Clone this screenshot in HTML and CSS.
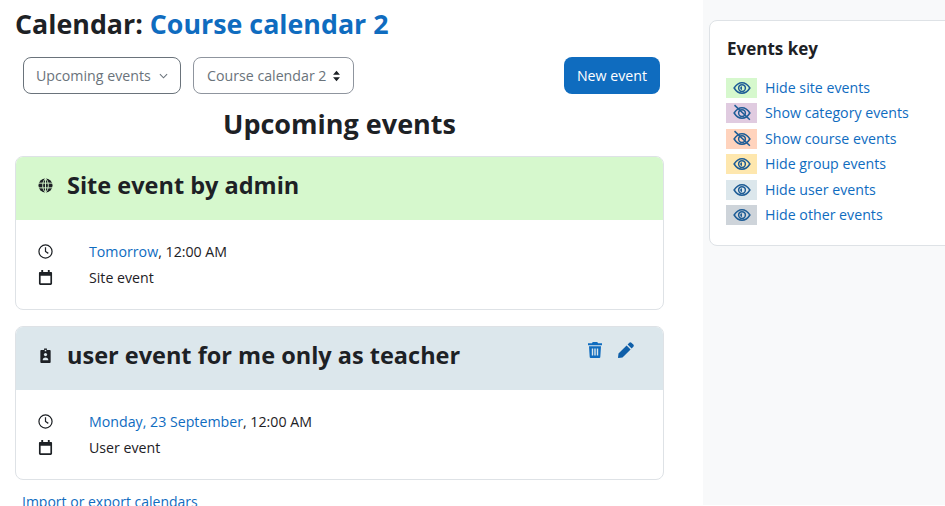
FILE: index.html
```html
<!DOCTYPE html>
<html lang="en">
<head>
<meta charset="utf-8">
<title>Calendar: Course calendar 2</title>
<link rel="stylesheet" href="styles.css">
</head>
<body>
<svg class="defs" width="0" height="0" aria-hidden="true">
  <symbol id="eye" viewBox="0 0 24 24"><path d="M1.500 12C4.500 7.200 8 5 12 5s7.500 2.200 10.500 7c-3 4.800-6.500 7-10.500 7S4.500 16.800 1.500 12z" fill="none" stroke="currentColor" stroke-width="2"/><circle cx="12" cy="12" r="4.500" fill="none" stroke="currentColor" stroke-width="2"/><path d="M12 9.500a2.500 2.500 0 0 0 0 5z" fill="currentColor"/></symbol>
  <symbol id="eyeoff" viewBox="0 0 24 24"><path d="M1.500 12C4.500 7.200 8 5 12 5s7.500 2.200 10.500 7c-3 4.800-6.500 7-10.500 7S4.500 16.800 1.500 12z" fill="none" stroke="currentColor" stroke-width="2"/><circle cx="12" cy="12" r="4.500" fill="none" stroke="currentColor" stroke-width="2"/><path d="M2 1.500L22.500 21" stroke="currentColor" stroke-width="2"/></symbol>
  <symbol id="clock" viewBox="0 0 16 16"><circle cx="8" cy="8" r="7" fill="none" stroke="currentColor" stroke-width="1.300"/><path d="M8 3.500V8l3 2" fill="none" stroke="currentColor" stroke-width="1.300"/></symbol>
  <symbol id="cal" viewBox="0 0 16 16"><path d="M3.500 0h2v2h5V0h2v2H14a1 1 0 0 1 1 1v11.500a1.500 1.500 0 0 1-1.500 1.500h-11A1.500 1.500 0 0 1 1 14.500V3a1 1 0 0 1 1-1h1.500zM2.800 6v8.200h10.400V6z" fill="currentColor" fill-rule="evenodd"/></symbol>
</svg>
<div class="page">
  <main class="main">
    <h1 class="title">Calendar: <a href="#">Course calendar 2</a></h1>
    <div class="controls">
      <button class="select select-view">Upcoming events
        <svg class="chev" viewBox="0 0 10 6" width="9" height="6"><path d="M1 1l4 4 4-4" fill="none" stroke="currentColor" stroke-width="1.200"/></svg>
      </button>
      <button class="select select-course">Course calendar 2
        <svg class="updown" viewBox="0 0 10 14" width="9" height="12"><path d="M5 1l4 4.500H1zM5 13L1 8.500h8z" fill="#1d2125"/></svg>
      </button>
      <button class="primary">New event</button>
    </div>
    <h2 class="heading">Upcoming events</h2>

    <article class="event">
      <header class="event-head site">
        <svg class="type-icon" viewBox="0 0 16 16" width="15" height="15"><circle cx="8" cy="8" r="7.500" fill="#1d2125"/><path d="M0 5.500h16M0 10.500h16M8 0v16M8 .5C4 4 4 12 8 15.500M8 .5c4 3.500 4 11.500 0 15" fill="none" stroke="#d6f8cd" stroke-width="1"/></svg>
        <h3>Site event by admin</h3>
      </header>
      <div class="event-body">
        <div class="row">
          <svg class="row-icon"><use href="#clock"/></svg>
          <span><a href="#">Tomorrow</a>, 12:00 AM</span>
        </div>
        <div class="row">
          <svg class="row-icon"><use href="#cal"/></svg>
          <span>Site event</span>
        </div>
      </div>
    </article>

    <article class="event">
      <header class="event-head user">
        <svg class="type-icon" viewBox="0 0 16 16" width="15" height="15"><path d="M3.500 2h3V.6h3V2h3a1 1 0 0 1 1 1v12a1 1 0 0 1-1 1h-9a1 1 0 0 1-1-1V3a1 1 0 0 1 1-1z" fill="#1d2125"/><circle cx="8" cy="7" r="1.700" fill="#dce7ec"/><path d="M5 13c0-2 1.200-3 3-3s3 1 3 3z" fill="#dce7ec"/><rect x="7.200" y="2" width="1.600" height="1.500" fill="#dce7ec"/></svg>
        <h3>user event for me only as teacher</h3>
        <div class="actions">
          <svg viewBox="0 0 14 16" width="14" height="16"><path d="M4.700 0h4.600l.7 1.200h4v2H0v-2h4zM1 4.300h12L12.300 15a1 1 0 0 1-1 1H2.700a1 1 0 0 1-1-1zM3.800 6.500v7h1.400v-7zm2.500 0v7h1.400v-7zm2.500 0v7h1.400v-7z" fill="#0f6cbf" fill-rule="evenodd"/></svg>
          <svg viewBox="0 0 16 16" width="16" height="16"><path d="M11.300.7a1.500 1.500 0 0 1 2.100 0l1.900 1.900a1.500 1.500 0 0 1 0 2.100l-1.700 1.700-4-4zM8.600 3.400l4 4L4.500 15.500.4 16a.4.4 0 0 1-.4-.4l.5-4.100z" fill="#0f5fa8"/></svg>
        </div>
      </header>
      <div class="event-body">
        <div class="row">
          <svg class="row-icon"><use href="#clock"/></svg>
          <span><a href="#">Monday, 23 September</a>, 12:00 AM</span>
        </div>
        <div class="row">
          <svg class="row-icon"><use href="#cal"/></svg>
          <span>User event</span>
        </div>
      </div>
    </article>
    <a class="export" href="#">Import or export calendars</a>
  </main>
  <aside class="side">
    <section class="key">
      <h4>Events key</h4>
      <ul>
        <li><span class="swatch site"><svg><use href="#eye"/></svg></span><a href="#">Hide site events</a></li>
        <li><span class="swatch category"><svg><use href="#eyeoff"/></svg></span><a href="#">Show category events</a></li>
        <li><span class="swatch course"><svg><use href="#eyeoff"/></svg></span><a href="#">Show course events</a></li>
        <li><span class="swatch group"><svg><use href="#eye"/></svg></span><a href="#">Hide group events</a></li>
        <li><span class="swatch user"><svg><use href="#eye"/></svg></span><a href="#">Hide user events</a></li>
        <li><span class="swatch other"><svg><use href="#eye"/></svg></span><a href="#">Hide other events</a></li>
      </ul>
    </section>
  </aside>
</div>
</body>
</html>
```
FILE: styles.css
```css
* { box-sizing: border-box; }
html, body { margin: 0; height: 506px; overflow: hidden; }
body {
  background: #fff;
  color: #1d2125;
  font-family: "Open Sans", "Noto Sans", sans-serif;
  font-size: 14.2px;
  line-height: 22px;
}
a { color: #0f6cbf; text-decoration: none; }
.defs { position: absolute; }
.page { display: flex; height: 506px; }
.main { width: 703px; flex: none; padding: 0 39px 0 15px; }
.title { margin: 0; padding-top: 7px; font-size: 26.800px; line-height: 34px; font-weight: 700; }
.controls { display: flex; align-items: center; margin-top: 16px; padding: 0 4px 0 8px; }
.select {
  height: 37px;
  display: flex; align-items: center; justify-content: space-between;
  background: #fff; color: #6a737b;
  border: 1px solid #8f959e; border-radius: 8px;
  font: inherit; padding: 0 12px;
}
.select-view { width: 158px; border-color: #6a737b; }
.select-course { width: 161px; margin-left: 12px; padding-left: 13px; }
.primary {
  margin-left: auto; width: 96px; height: 37px;
  background: #0f6cbf; color: #fff; border: 0; border-radius: 8px;
  font: inherit;
}
.heading { margin: 12px 0 0; text-align: center; font-size: 27px; line-height: 36px; font-weight: 700; }
.event { margin-top: 14px; border: 1px solid #dee2e6; border-radius: 8px; overflow: hidden; height: 154px; }
.event + .event { margin-top: 16px; }
.event-head { height: 63px; display: flex; align-items: center; padding: 0 28px 6px 22px; position: relative; }
.event-head.site { background: #d6f8cd; }
.event-head.user { background: #dce7ec; }
.event-head h3 { margin: -1px 0 0 14px; font-size: 23.500px; line-height: 30px; font-weight: 700; }
.type-icon { flex: none; }
.actions { position: absolute; right: 29px; top: 15px; display: flex; gap: 16px; }
.event-body { padding: 19px 22px 0; }
.row { display: flex; align-items: center; height: 26px; }
.row-icon { width: 15px; height: 15px; flex: none; margin: 0 36px 2px 0; color: #1d2125; }
.export { display: block; margin: 11px 0 0 7px; font-size: 14px; }
.side { flex: 1; background: #f8f9fa; padding: 20px 0 0 6px; height: 505px; }
.key { height: 226px; margin-right: -20px; background: #fff; border: 1px solid #dee2e6; border-radius: 8px; padding: 16px 16px; }
.key h4 { margin: 0 0 0 1px; font-size: 17px; line-height: 24px; font-weight: 700; }
.key ul { list-style: none; margin: 17px 0 0; padding: 0; }
.key li { display: flex; align-items: center; height: 20px; margin-bottom: 5.400px; }
.swatch { width: 31px; height: 20px; margin-right: 8px; display: flex; align-items: center; justify-content: center; color: #1d5c96; }
.swatch svg { width: 18px; height: 18px; }
.swatch.site { background: #d6f8cd; }
.swatch.category { background: #e0cbe0; }
.swatch.course { background: #ffd3bd; }
.swatch.group { background: #fee7ae; }
.swatch.user { background: #dce7ec; }
.swatch.other { background: #ced4da; }
```
